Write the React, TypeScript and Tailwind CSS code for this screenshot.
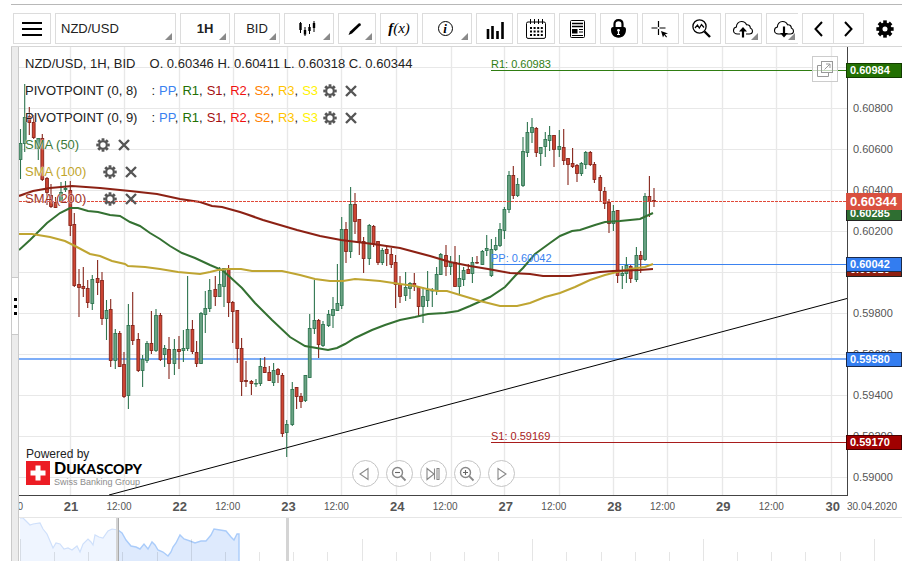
import type { ReactNode } from 'react';
import clsx from 'clsx';

// x, high, low, body top, body bottom, direction (1 = up, 0 = down)
type Candle = [number, number, number, number, number, 0 | 1];

const candles: Candle[] = [
  [20.5, 129, 179, 143, 160, 1], [24.7, 84, 152, 117, 144, 1], [29.3, 107, 135, 116, 123, 0],
  [33.7, 115, 139, 122, 138, 0], [38.3, 138, 160, 138, 149, 1], [42.3, 134, 181, 138, 180, 0],
  [47, 177, 205, 178, 193, 0], [51, 184, 208, 195, 207, 0], [55.5, 197, 208, 202, 208, 0],
  [61, 182, 203, 192, 202, 1], [65.5, 181, 192, 188, 190, 1], [70.3, 181, 236, 190, 226, 0],
  [74.3, 213, 287, 224, 286, 0], [79, 269, 317, 284, 288, 0], [83.3, 267, 297, 286, 289, 0],
  [87.7, 280, 308, 288, 303, 0], [92.3, 275, 310, 279, 304, 1], [97.6, 260, 295, 278, 283, 0],
  [102, 272, 325, 280, 319, 0], [106.5, 300, 340, 310, 319, 1], [110.7, 299, 367, 309, 361, 0],
  [115.3, 329, 369, 333, 361, 1], [119.7, 331, 367, 333, 367, 0], [124, 352, 398, 364, 397, 0],
  [128.4, 304, 409, 325, 396, 1], [132.7, 292, 345, 325, 341, 0], [138.3, 333, 372, 339, 371, 0],
  [142.6, 355, 387, 359, 371, 1], [147, 341, 363, 343, 361, 1], [151.4, 311, 354, 343, 351, 0],
  [156, 309, 352, 315, 351, 1], [160.4, 313, 361, 315, 360, 0], [164.6, 345, 367, 348, 355, 1],
  [169, 337, 379, 349, 364, 0], [174.4, 339, 375, 349, 364, 1], [179, 336, 369, 349, 352, 0],
  [183.4, 330, 362, 348, 351, 1], [187.6, 276, 351, 329, 349, 1], [192.4, 320, 354, 329, 352, 0],
  [196.6, 341, 367, 352, 364, 0], [201, 312, 364, 313, 364, 1], [205.3, 291, 333, 308, 315, 1],
  [209.7, 279, 312, 290, 309, 1], [215.3, 276, 306, 289, 297, 0], [219.6, 267, 297, 284, 297, 1],
  [224, 268, 307, 268, 287, 1], [228.6, 265, 317, 268, 303, 0], [232.7, 301, 343, 302, 312, 0],
  [237.3, 310, 363, 310, 349, 0], [241.6, 338, 396, 348, 382, 0], [246, 361, 387, 380, 382, 0],
  [251.4, 380, 395, 381, 384, 0], [256, 379, 387, 383, 384, 1], [260.4, 358, 386, 366, 384, 1],
  [264.7, 357, 373, 367, 373, 0], [269.3, 366, 381, 372, 381, 0], [273.6, 363, 386, 370, 383, 1],
  [278, 368, 383, 369, 375, 0], [282.4, 373, 437, 375, 434, 0], [286.7, 420, 457, 424, 433, 1],
  [292.3, 382, 426, 389, 425, 1], [296.6, 387, 409, 387, 397, 0], [301, 393, 408, 396, 402, 0],
  [305.4, 375, 402, 375, 401, 1], [309.7, 314, 378, 328, 378, 1], [314.4, 280, 334, 320, 329, 1],
  [318.6, 319, 358, 320, 345, 0], [323, 321, 347, 324, 346, 1], [328.6, 310, 327, 314, 326, 1],
  [333, 297, 328, 309, 316, 1], [337.4, 264, 311, 303, 311, 1], [341.7, 217, 309, 229, 306, 1],
  [346, 222, 263, 229, 252, 0], [350.6, 187, 258, 204, 252, 1], [355, 193, 234, 204, 222, 0],
  [359.3, 219, 255, 219, 242, 0], [363.6, 237, 273, 241, 259, 0], [369.3, 224, 265, 225, 259, 1],
  [373.6, 225, 247, 226, 244, 0], [378, 241, 265, 241, 263, 0], [382.3, 248, 265, 250, 263, 1],
  [386.7, 246, 266, 249, 254, 0], [391.3, 248, 268, 254, 265, 0], [395.6, 255, 308, 262, 285, 0],
  [400, 276, 303, 284, 297, 0], [405.6, 272, 301, 287, 296, 1], [410, 282, 299, 283, 289, 1],
  [414.3, 273, 291, 283, 287, 0], [418.6, 287, 317, 287, 307, 0], [423, 287, 323, 296, 307, 1],
  [427.6, 271, 307, 290, 301, 1], [432.3, 288, 307, 290, 291, 1], [436.6, 267, 295, 274, 291, 1],
  [440.7, 253, 275, 254, 275, 1], [446, 245, 276, 255, 267, 0], [450.6, 256, 275, 262, 267, 1],
  [455, 246, 287, 262, 287, 0], [459.4, 255, 295, 278, 287, 1], [463.6, 267, 286, 270, 280, 1],
  [468.3, 264, 274, 269, 274, 0], [472.4, 257, 283, 262, 274, 1], [477, 256, 264, 262, 263, 0],
  [482.4, 250, 265, 251, 265, 1], [486.7, 235, 256, 248, 251, 1], [491.4, 239, 277, 249, 276, 1],
  [495.7, 237, 251, 245, 250, 1], [500, 223, 247, 229, 246, 1], [504.4, 207, 239, 209, 231, 1],
  [509, 171, 213, 175, 210, 1], [513.3, 166, 199, 175, 196, 0], [517.6, 178, 197, 184, 196, 1],
  [523, 137, 187, 151, 186, 1], [527.4, 122, 157, 132, 153, 1], [532, 118, 143, 127, 133, 1],
  [536.3, 127, 157, 128, 153, 0], [540.7, 147, 166, 147, 154, 1], [545.3, 132, 157, 139, 147, 1],
  [549.6, 126, 151, 135, 141, 1], [554, 135, 167, 135, 150, 0], [559.3, 130, 157, 146, 150, 1],
  [563.7, 129, 165, 147, 161, 0], [568, 158, 185, 158, 165, 0], [572.6, 148, 168, 163, 167, 0],
  [577, 164, 182, 165, 174, 0], [581.4, 162, 176, 163, 174, 1], [585.7, 151, 169, 152, 165, 1],
  [590.3, 151, 166, 152, 165, 0], [594.4, 162, 183, 164, 180, 0], [600.3, 175, 201, 177, 191, 0],
  [604.7, 187, 209, 191, 204, 0], [609, 199, 233, 202, 224, 0], [613.4, 205, 231, 211, 224, 1],
  [617.6, 210, 283, 210, 276, 0], [622.3, 266, 289, 273, 276, 1], [626.4, 257, 283, 265, 274, 1],
  [630.7, 265, 283, 266, 279, 0], [636.4, 247, 282, 255, 280, 1], [640.7, 251, 273, 255, 260, 0],
  [645, 193, 261, 196, 260, 1], [649.4, 176, 217, 196, 202, 0], [654, 188, 207, 200, 202, 0],
];

const sma50 =
  '19,250 30,240 38,232 47,223 60,213 70,208 78,208 88,211 98,212 110,215 120,216 130,222 140,226 150,233 160,239 170,246 182,253 195,258 210,265 222,270 230,277 242,288 255,303 272,320 290,337 305,346 328,350 337,348 345,344 355,338 372,330 385,325 400,320 415,317 428,314 445,313 458,311 470,306 490,297 505,287 515,276 523,268 535,254 550,243 560,236 572,231 580,230 595,225 605,222 620,221 640,219 653,213';
const sma100 =
  '19,234 32,234 50,237 65,241 75,246 90,254 100,256 112,261 125,264 128,266 145,267 160,269 178,272 200,274 210,272 218,270 228,269 241,269 252,271 282,271 300,275 315,279 330,281 343,281 355,279 368,280 380,281 400,284 415,286 427,289 437,291 447,291 460,295 480,301 500,306 517,306 530,303 545,297 560,293 575,287 590,280 605,275 617,272 630,269 645,267 653,264';
const sma200 =
  '19,196 33,191 50,188 72,186 100,188 130,191 157,194 180,199 200,202 212,206 222,207 240,212 246,214 263,220 280,225 297,230 320,236 341,240 373,244 400,248 430,256 450,262 470,266 488,269 510,273 530,274 543,276 570,276 585,274 600,272 613,271 640,270 653,269';

const overview =
  '20,518 23,518 26,521 30,525 33,524 40,523 43,529 47,534 50,541 53,548 56,543 60,544 64,549 68,548 72,550 77,546 80,552 83,544 88,539 91,542 93,545 95,535 99,537 103,538 108,531 112,529 118,530';
const overviewActive =
  '118,530 122,533 126,540 131,546 136,547 140,549 144,544 148,549 152,542 155,545 158,550 163,552 168,556 171,552 173,547 176,543 180,535 184,539 190,541 195,543 201,541 206,541 211,535 214,529 220,530 226,531 231,537 234,540 237,534 239,534';

const gridX = [70, 124, 179, 233, 287, 341, 396, 451, 504, 559, 613, 667, 722, 776, 831];
const gridY = [67, 108, 149, 190, 231, 272, 313, 354, 395, 436, 477];
const navTicks = Array.from({ length: 26 }, (_, i) => i);

const prices = ['0.61000', '0.60800', '0.60600', '0.60400', '0.60200', '0.60000', '0.59800', '0.59600', '0.59400', '0.59200', '0.59000'];
const days = ['21', '22', '23', '24', '27', '28', '29'];

const badges = [
  { value: '0.60984', className: 'top-[16px] bg-[#237003] border-[#123c00]' },
  { value: '0.60285', className: 'top-[159px] bg-[#2e6e31] border-[#222]' },
  { value: '0.60010', className: 'top-[215px] bg-[#8f1f10] border-[#222]' },
  { value: '0.60042', className: 'top-[210px] bg-[#337df0] border-[#1b2a4a]' },
  { value: '0.59580', className: 'top-[305px] bg-[#337df0] border-[#1b2a4a]' },
  { value: '0.59170', className: 'top-[388px] bg-[#a00000] border-[#4a0000]' },
];

const pivots = [
  { name: 'PP', className: 'text-[#3b82f0]' },
  { name: 'R1', className: 'text-[#237003]' },
  { name: 'S1', className: 'text-[#a31010]' },
  { name: 'R2', className: 'text-[#f01010]' },
  { name: 'S2', className: 'text-[#ff8000]' },
  { name: 'R3', className: 'text-[#ffc400]' },
  { name: 'S3', className: 'text-[#fff200]' },
];

const teeth = [0, 45, 90, 135, 180, 225, 270, 315];

function Gear({ size, r, stroke }: { size: number; r: number; stroke: number }) {
  return (
    <svg width={size} height={size} viewBox="-10 -10 20 20" stroke="currentColor" fill="none" aria-hidden="true">
      <circle r={r} strokeWidth={stroke} />
      {teeth.map((a) => (
        <path key={a} d="M0 -6V-9.6" strokeWidth="4" transform={`rotate(${a})`} />
      ))}
    </svg>
  );
}

function Corner() {
  return (
    <svg className="pointer-events-none absolute right-[3px] bottom-[3px]" width="7" height="7" aria-hidden="true">
      <path d="M7 0V7H0Z" fill="#8a8a8a" />
    </svg>
  );
}

function ToolButton({ label, className, corner, children }: { label: string; className?: string; corner?: boolean; children: ReactNode }) {
  return (
    <button
      aria-label={label}
      className={clsx('relative flex h-[31px] items-center justify-center border border-[#dcdcdc] bg-white text-black', className)}
    >
      {children}
      {corner && <Corner />}
    </button>
  );
}

function ToolSelect({ label, options, className }: { label: string; options: string[]; className: string }) {
  return (
    <div className={clsx('relative h-[31px] shrink-0 border border-[#dcdcdc] text-[13px]', className)}>
      <select aria-label={label} className="h-full w-full appearance-none bg-transparent px-[5px] [text-align-last:inherit] outline-none">
        {options.map((o) => (
          <option key={o}>{o}</option>
        ))}
      </select>
      <Corner />
    </div>
  );
}

function Cloud({ children }: { children: ReactNode }) {
  return (
    <svg className="shrink-0" width="22" height="18" viewBox="0 0 22 18" fill="none" stroke="black" aria-hidden="true">
      <path
        d="M8 14H5.5C3 14 1.5 12.4 1.5 10.4C1.5 8.6 2.8 7.3 4.4 7C4.3 3.8 6.6 1.5 9.6 1.5C12 1.5 13.8 2.8 14.5 4.8C16.8 4.5 18.4 6 18.3 8C19.7 8.6 20.5 9.7 20.5 11C20.5 12.8 19.2 14 17.3 14H14"
        strokeWidth="1.1"
      />
      {children}
    </svg>
  );
}

function Toolbar() {
  return (
    <header className="flex gap-1 pt-2 pb-[2px] pl-[2px]">
      <ToolButton label="Menu" className="w-[38px] shrink-0">
        <svg width="20" height="14" stroke="black" strokeWidth="2" aria-hidden="true">
          <path d="M0 1H20M0 7H20M0 13H20" />
        </svg>
      </ToolButton>
      <ToolSelect label="Instrument" options={['NZD/USD', 'EUR/USD']} className="w-[121px]" />
      <ToolSelect label="Period" options={['1H', '4H', '1D']} className="w-[50px] font-bold [text-align-last:center]" />
      <ToolSelect label="Offer side" options={['BID', 'ASK']} className="w-[46px] [text-align-last:center]" />
      <ToolButton label="Chart type" className="w-[50px] shrink-0" corner>
        <svg className="mr-1" width="18" height="16" stroke="black" aria-hidden="true">
          <path d="M2.5 1V12M7 6V15M11.5 3V13M16 0V11" />
          <path d="M2.5 2V9M7 9V13.5M11.5 6V10M16 2V7" strokeWidth="2.4" />
        </svg>
      </ToolButton>
      <ToolButton label="Draw" className="w-[38px] shrink-0" corner>
        <svg className="mr-1" width="14" height="14" aria-hidden="true">
          <path d="M0.5 13L2 9.6L10.6 1.4C11.8 0.6 13.4 1.8 12.6 3.2L4 11.4Z" fill="black" />
        </svg>
      </ToolButton>
      <ToolButton label="Indicators" className="w-[38px] shrink-0 font-['Liberation_Serif',serif] text-[15px] italic">
        <span><b>f</b>(x)</span>
      </ToolButton>
      <ToolButton label="Info" className="w-[50px] shrink-0" corner>
        <span className="mr-1 flex size-[15px] items-center justify-center rounded-full border border-black pb-px font-['Liberation_Serif',serif] text-[13px] leading-none font-bold italic">
          i
        </span>
      </ToolButton>
      <div className="flex min-w-0 flex-1 gap-1">
        <ToolButton label="Volume" className="flex-1">
          <svg className="mt-1" width="18" height="17" stroke="black" strokeWidth="2.6" aria-hidden="true">
            <path d="M2 7V17M6.5 4V17M11.5 9V17M16.5 0V17" />
          </svg>
        </ToolButton>
        <ToolButton label="Calendar" className="flex-1">
          <svg width="20" height="20" fill="none" stroke="black" aria-hidden="true">
            <rect x="0.5" y="3" width="19" height="16.4" rx="1.5" />
            <path d="M4.5 0V5M8.5 0V5M12.5 0V5M16.5 0V5" />
            <path d="M4 9H17M4 12.5H17M4 16H17" strokeWidth="2" strokeDasharray="2 1.6" />
          </svg>
        </ToolButton>
        <ToolButton label="News" className="flex-1">
          <svg width="15" height="18" fill="none" stroke="black" aria-hidden="true">
            <rect x="0.5" y="0.5" width="14" height="17" rx="1" />
            <path d="M2 3.5H13M2 6.5H13" strokeWidth="1.4" />
            <path d="M9 9.5H13M9 12H13M2 15.5H13" />
            <rect x="2" y="9" width="5.5" height="4.5" fill="black" stroke="none" />
          </svg>
        </ToolButton>
        <ToolButton label="Lock" className="flex-1">
          <svg width="15" height="19" fill="none" aria-hidden="true">
            <path d="M3.5 9V5C3.5 2.6 5 1.2 7.5 1.2S11.5 2.6 11.5 5V9" stroke="black" strokeWidth="2.2" />
            <path d="M2 8H13C14.4 8 15 9 15 10.5C15 15.5 12 18.7 7.5 18.7S0 15.5 0 10.5C0 9 0.6 8 2 8Z" fill="black" />
            <path d="M7.5 10.5V15.5M6 15.5H9" stroke="white" strokeWidth="1.2" />
            <circle cx="7.5" cy="11.3" r="1.4" fill="white" />
          </svg>
        </ToolButton>
        <ToolButton label="Crosshair" className="flex-1">
          <svg width="18" height="18" aria-hidden="true">
            <path d="M7.5 1V7M7.5 9V15M0.5 8H6.5M8.5 8H14.5" stroke="black" strokeWidth="1.2" />
            <path d="M10 11L17 13.6L14 14.3L16 16.8L15.2 17.5L13.2 15L12 17.5Z" fill="black" />
          </svg>
        </ToolButton>
        <ToolButton label="Zoom area" className="flex-1">
          <svg width="19" height="19" fill="none" stroke="black" aria-hidden="true">
            <circle cx="7.5" cy="7.5" r="6.6" strokeWidth="1.3" />
            <path d="M3 9L5.5 6L7.3 9L9.5 5.5L12 8.5" strokeWidth="1.2" />
            <path d="M12.5 12.5L18 18" strokeWidth="2.4" />
          </svg>
        </ToolButton>
        <ToolButton label="Save chart" className="flex-1" corner>
          <Cloud>
            <path d="M11 17.5V10" strokeWidth="2.2" />
            <path d="M11 7L15 11.5H7Z" fill="black" stroke="none" />
          </Cloud>
        </ToolButton>
        <ToolButton label="Load chart" className="w-8 shrink-0 border-r-0 pl-1" corner>
          <Cloud>
            <path d="M11 6.5V14" strokeWidth="2.2" />
            <path d="M11 17.5L15 13H7Z" fill="black" stroke="none" />
          </Cloud>
        </ToolButton>
      </div>
      <div className="flex shrink-0">
        <ToolButton label="Scroll left" className="w-[31px] border-r-0">
          <svg width="9" height="16" fill="none" stroke="black" strokeWidth="2" aria-hidden="true">
            <path d="M8 1L1.5 8L8 15" />
          </svg>
        </ToolButton>
        <ToolButton label="Scroll right" className="w-[31px]">
          <svg width="9" height="16" fill="none" stroke="black" strokeWidth="2" aria-hidden="true">
            <path d="M1 1L7.5 8L1 15" />
          </svg>
        </ToolButton>
      </div>
      <button aria-label="Settings" className="flex w-[34px] shrink-0 items-center justify-center text-black">
        <Gear size={18} r={5} stroke={4.4} />
      </button>
    </header>
  );
}

function LegendActions({ name, className }: { name: string; className: string }) {
  return (
    <span className={clsx('flex items-center gap-2 text-[#555]', className)}>
      <button aria-label={`Edit ${name}`}>
        <Gear size={14} r={5.4} stroke={3} />
      </button>
      <button aria-label={`Remove ${name}`}>
        <svg width="12" height="12" stroke="currentColor" strokeWidth="2.4" aria-hidden="true">
          <path d="M1 1L11 11M11 1L1 11" />
        </svg>
      </button>
    </span>
  );
}

function Legend() {
  return (
    <div className="absolute top-[3px] left-[6px] text-[13px] [text-shadow:0_0_1px_white,0_0_2px_white] *:flex *:h-[27px] *:items-center">
      <div className="gap-[14px]">
        <span>NZD/USD, 1H, BID</span>
        <span>O. 0.60346 H. 0.60411 L. 0.60318 C. 0.60344</span>
      </div>
      {['PIVOTPOINT (0, 8)', 'PIVOTPOINT (0, 9)'].map((name) => (
        <div key={name}>
          <span className="mr-[14px]">{name}</span>
          <span className="flex gap-1">
            <span>:</span>
            {pivots.map((p, i) => (
              <span key={p.name}>
                <span className={p.className}>{p.name}</span>
                {i < pivots.length - 1 && ','}
              </span>
            ))}
          </span>
          <LegendActions name={name} className="ml-[5px]" />
        </div>
      ))}
      <div className="text-[#3c7a3a]">
        SMA (50)
        <LegendActions name="SMA (50)" className="ml-[17px]" />
      </div>
      <div className="text-[#bfa52c]">
        SMA (100)
        <LegendActions name="SMA (100)" className="ml-[17px]" />
      </div>
      <div className="text-[#a03226]">
        SMA (200)
        <LegendActions name="SMA (200)" className="ml-[17px]" />
      </div>
    </div>
  );
}

function Plot() {
  return (
    <svg className="block h-full w-full" viewBox="19 47 828 448" preserveAspectRatio="none" fill="none" aria-hidden="true">
      {gridX.map((x) => (
        <path key={x} d={`M${x + 0.5} 47V495`} stroke="#e8e8e8" strokeWidth="1.4" />
      ))}
      {gridY.map((y) => (
        <path key={y} d={`M19 ${y + 0.5}H847`} stroke="#e8e8e8" />
      ))}
      <path d="M19 359H847" stroke="#7eaef8" strokeWidth="2" />
      <path d="M491 264.5H847" stroke="#3b82f0" strokeWidth="1.2" />
      <path d="M491 70.5H847" stroke="#2f7d12" strokeWidth="1.2" />
      <path d="M491 442.5H847" stroke="#a81c1c" strokeWidth="1.2" />
      <path d="M109 495L847 298.5" stroke="black" />
      {candles.map(([x, high, low, top, bottom, up]) => (
        <g key={x} stroke={up ? '#2f7550' : '#86251b'}>
          <path d={`M${x} ${high}V${low}`} strokeWidth="1.1" />
          <rect
            x={x - 1.4}
            y={top + 0.5}
            width="2.8"
            height={Math.max(bottom - top - 1, 0.5)}
            strokeWidth="0.9"
            fill={up ? '#6aa384' : '#cf4634'}
          />
        </g>
      ))}
      <polyline points={sma50} stroke="#347132" strokeWidth="2" />
      <polyline points={sma100} stroke="#bfa532" strokeWidth="2" />
      <polyline points={sma200} stroke="#8c2114" strokeWidth="2.2" />
      <path d="M19 201.5H847" stroke="#e04a3a" strokeDasharray="3 1" />
    </svg>
  );
}

function RoundButton({ label, children }: { label: string; children: ReactNode }) {
  return (
    <button aria-label={label} className="flex size-[27px] items-center justify-center rounded-full border border-[#c4c4c4] bg-white/80">
      <svg width="16" height="16" fill="none" stroke="#888" strokeWidth="1.1" aria-hidden="true">
        {children}
      </svg>
    </button>
  );
}

function Controls() {
  return (
    <div className="absolute inset-x-0 bottom-2 flex justify-center gap-[7px]">
      <RoundButton label="Back">
        <path d="M11 2.5V13.5L3 8Z" />
      </RoundButton>
      <RoundButton label="Zoom out">
        <circle cx="6.5" cy="6.5" r="5" strokeWidth="1.4" />
        <path d="M4 6.5H9" stroke="#666" />
        <path d="M10.2 10.2L14.5 14.5" strokeWidth="1.8" />
      </RoundButton>
      <RoundButton label="To latest">
        <path d="M2 2.5V13.5L9 8ZM9.5 2.5V13.5M12 2.5H14V13.5H12Z" />
      </RoundButton>
      <RoundButton label="Zoom in">
        <circle cx="6.5" cy="6.5" r="5" strokeWidth="1.4" />
        <path d="M4 6.5H9M6.5 4V9" stroke="#666" />
        <path d="M10.2 10.2L14.5 14.5" strokeWidth="1.8" />
      </RoundButton>
      <RoundButton label="Forward">
        <path d="M5 2.5V13.5L13 8Z" />
      </RoundButton>
    </div>
  );
}

function Brand() {
  return (
    <a href="#" className="absolute bottom-[7px] left-[7px] block text-[#222]">
      <span className="block text-[12px] leading-[14px]">Powered by</span>
      <span className="flex gap-1">
        <svg width="24" height="24" aria-hidden="true">
          <rect width="24" height="24" fill="#ec1c24" />
          <path d="M12 4.5V19.5M4.5 12H19.5" stroke="white" strokeWidth="5" />
        </svg>
        <span className="block">
          <span className="block font-[Lato,sans-serif] text-[14px] leading-[14px] font-black text-black">
            <span className="text-[16px]">D</span>UKASCOPY
          </span>
          <span className="block text-[9px] leading-[12px] text-[#8c8c8c]">Swiss Banking Group</span>
        </span>
      </span>
    </a>
  );
}

function PriceAxis() {
  return (
    <div className="relative w-[55px] shrink-0 border-l border-[#444]">
      <div className="h-full overflow-hidden pl-[5px] text-[11px] text-[#555]">
        {prices.map((p) => (
          <div key={p} className="flex h-[41px] items-center">{p}</div>
        ))}
      </div>
      {badges.map((b) => (
        <div
          key={b.value}
          className={clsx('absolute right-0 -left-[2px] h-[15px] border pl-[3px] text-[11px] leading-[13px] font-bold text-white', b.className)}
        >
          {b.value}
        </div>
      ))}
      <div className="absolute top-[146px] right-0 -left-[2px] h-[17px] bg-[#d9503f] pl-[4px] text-[13px] leading-[17px] font-bold text-white">
        0.60344
      </div>
    </div>
  );
}

function TimeAxis() {
  return (
    <div className="flex h-[21px] items-center text-[10px] text-[#555]">
      <span className="flex w-[22px] shrink-0 justify-end overflow-hidden pr-[18px]">12:00</span>
      <div className="grid flex-1 grid-cols-7">
        {days.map((d) => (
          <div key={d} className="flex items-center text-center">
            <b className="w-[60px] text-[13px]">{d}</b>
            <span className="w-9">12:00</span>
          </div>
        ))}
      </div>
      <b className="w-[45px] pr-[7px] text-right text-[13px]">30</b>
      <span className="w-[55px]">30.04.2020</span>
    </div>
  );
}

function Overview() {
  return (
    <svg className="block h-11 w-full border-t border-[#e6e6e6]" viewBox="19 518 883 43" preserveAspectRatio="none" fill="none" aria-hidden="true">
      <polygon points={`20,561 ${overview} 118,561`} fill="#eff5ff" />
      <polyline points={overview} stroke="#cfe0fb" strokeWidth="1.2" />
      <polygon points={`118,561 ${overviewActive} 239,561`} fill="#deeafd" />
      <polyline points={`${overviewActive} 239,561`} stroke="#aaccfa" strokeWidth="1.4" />
      {navTicks.map((i) => (
        <path key={i} d={`M${20.5 + Math.round(i * 34.15)} 561V${i % 5 === 0 ? 539 : 552}`} stroke="#000" strokeOpacity="0.1" />
      ))}
      <path d="M117.5 518V561M287.5 518V561" stroke="#d4d4d4" strokeWidth="3" />
      <path d="M118.5 518V561" stroke="#aaa" />
    </svg>
  );
}

export default function App() {
  return (
    <div className="bg-white pt-1 pr-[9px] pb-[5px] pl-[11px] font-['Liberation_Sans',Arial,sans-serif] text-[#222]">
      <div className="border-t border-[#b8b8b8]">
        <Toolbar />
        <main className="flex border-t border-[#d6d6d6]">
          <div className="flex w-2 shrink-0 items-center border-x border-[#cacaca] bg-[#ececec] pt-1">
            <button aria-label="Toggle side panel" className="flex h-[58px] w-full flex-col items-center justify-center gap-1 border-y border-[#cacaca] bg-white *:size-[3px] *:bg-black">
              <span />
              <span />
              <span />
            </button>
          </div>
          <div className="min-w-0 flex-1">
            <div className="flex h-[448px]">
              <div className="relative min-w-0 flex-1">
                <Plot />
                <div className="absolute top-[10px] left-[57%] text-[11px] leading-[14px] text-[#2f7d12]">R1: 0.60983</div>
                <div className="absolute top-[204px] left-[57%] text-[11px] leading-[14px] text-[#3b82f0]">PP: 0.60042</div>
                <div className="absolute top-[382px] left-[57%] text-[11px] leading-[14px] text-[#a81c1c]">S1: 0.59169</div>
                <Legend />
                <button aria-label="Detach chart" className="absolute top-[9px] right-[9px] flex size-[26px] items-center justify-center border border-[#ccc] bg-white/70">
                  <svg width="16" height="16" fill="none" stroke="#999" aria-hidden="true">
                    <path d="M4.5 4.5H0.5V15.5H11.5V11.5" />
                    <rect x="4.5" y="0.5" width="11" height="11" />
                    <path d="M7.5 8.5L13 3M9 3H13V7" />
                  </svg>
                </button>
                <Brand />
                <Controls />
              </div>
              <PriceAxis />
            </div>
            <div className="mr-[54px] border-t border-[#444]" />
            <TimeAxis />
            <Overview />
          </div>
        </main>
      </div>
    </div>
  );
}
